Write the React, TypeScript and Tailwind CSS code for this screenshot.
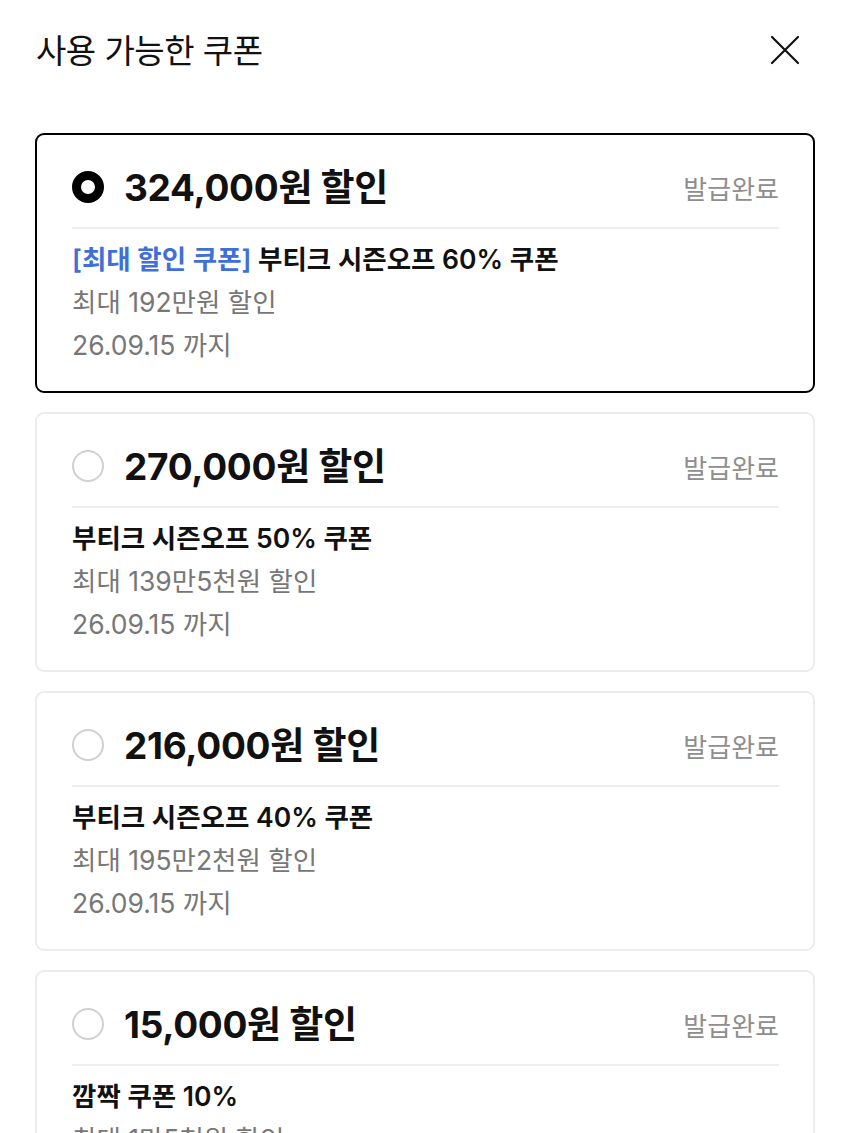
import React from "react";

type Coupon = {
  amount: string;
  tag?: string;
  name: string;
  max: string;
  until: string;
  selected?: boolean;
};

const coupons: Coupon[] = [
  { amount: "324,000원 할인", tag: "[최대 할인 쿠폰]", name: "부티크 시즌오프 60% 쿠폰", max: "최대 192만원 할인", until: "26.09.15 까지", selected: true },
  { amount: "270,000원 할인", name: "부티크 시즌오프 50% 쿠폰", max: "최대 139만5천원 할인", until: "26.09.15 까지" },
  { amount: "216,000원 할인", name: "부티크 시즌오프 40% 쿠폰", max: "최대 195만2천원 할인", until: "26.09.15 까지" },
  { amount: "15,000원 할인", name: "깜짝 쿠폰 10%", max: "최대 1만5천원 할인", until: "26.09.15 까지" },
];

function Radio({ selected }: { selected?: boolean }) {
  if (selected) {
    return <div className="w-[32px] h-[32px] rounded-full border-[9px] border-black bg-white shrink-0" />;
  }
  return <div className="w-[32px] h-[32px] rounded-full border-2 border-[#d0d0d0] bg-white shrink-0" />;
}

function Card({ c }: { c: Coupon }) {
  return (
    <div
      className={
        "rounded-[9px] bg-white pt-[29px] pl-[35px] pr-[34px] pb-[24px] " +
        (c.selected ? "border-2 border-black" : "border-2 border-[#ececec]")
      }
    >
      <div className="flex items-center h-[46px]">
        <Radio selected={c.selected} />
        <div className="ml-[20px] text-[37px] font-bold text-[#111] tracking-[-0.3px] leading-none">{c.amount}</div>
        <div className="ml-auto pt-[5px] text-[26px] text-[#8e8e8e] leading-none">발급완료</div>
      </div>
      <div className="mt-[17px] h-[2px] bg-[#eeeeee]" />
      <div className="mt-[9px] text-[26.5px] leading-[43px]">
        <div className="font-semibold text-[#111]">
          {c.tag && <span className="text-[#3f6fd8]">{c.tag} </span>}
          {c.name}
        </div>
        <div className="text-[#777777]">{c.max}</div>
        <div className="text-[#777777]">{c.until}</div>
      </div>
    </div>
  );
}

export default function App() {
  return (
    <div
      className="w-[850px] h-[1133px] overflow-hidden bg-white"
      style={{ fontFamily: 'Inter, "Noto Sans CJK KR", "Noto Sans", sans-serif' }}
    >
      <div className="flex items-center justify-between pl-[36px] pr-[50px] h-[100px]">
        <div className="pt-[4px] text-[33px] text-[#111] tracking-[-0.5px]">사용 가능한 쿠폰</div>
        <svg width="30" height="30" viewBox="0 0 30 30" fill="none" stroke="#111" strokeWidth="2.2" strokeLinecap="round">
          <path d="M2 2 L28 28 M28 2 L2 28" />
        </svg>
      </div>
      <div className="mt-[33px] px-[35px] flex flex-col gap-[19px]">
        {coupons.map((c, i) => (
          <Card key={i} c={c} />
        ))}
      </div>
    </div>
  );
}
